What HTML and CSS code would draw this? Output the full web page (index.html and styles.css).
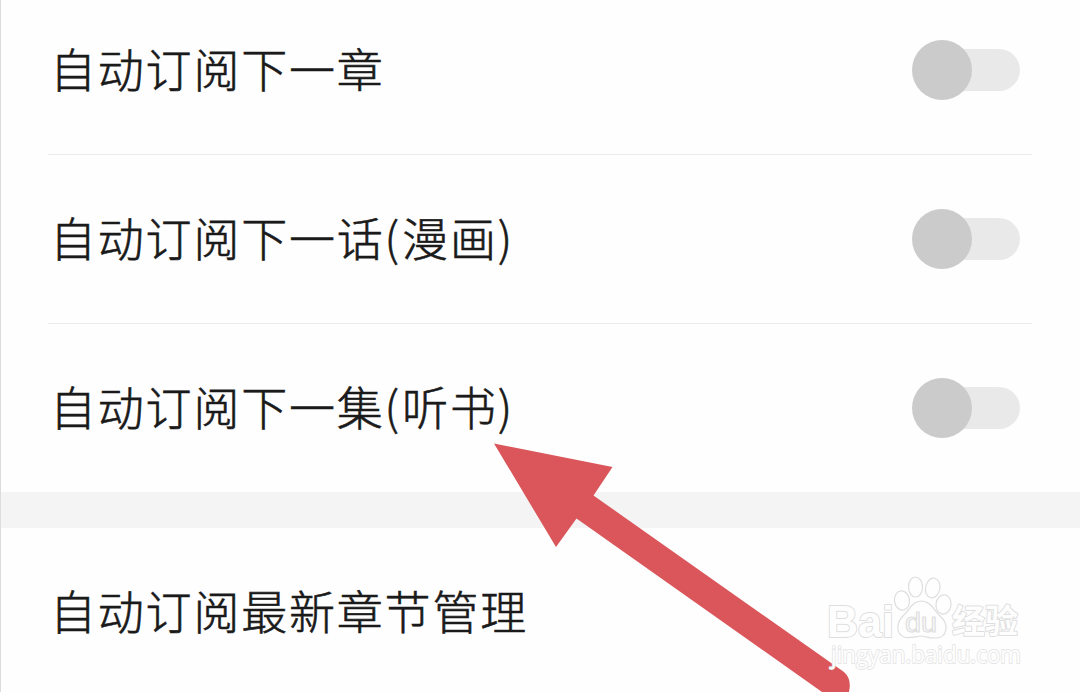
FILE: index.html
```html
<!DOCTYPE html>
<html lang="zh-CN">
<head>
<meta charset="utf-8">
<title>自动订阅</title>
<link rel="stylesheet" href="styles.css">
</head>
<body>
<main class="settings">
  <section class="group">
    <div class="row"><span class="label">自动订阅下一章</span><span class="switch"><span class="knob"></span></span></div>
    <div class="row"><span class="label">自动订阅下一话<span class="paren">(</span>漫画<span class="paren">)</span></span><span class="switch"><span class="knob"></span></span></div>
    <div class="row"><span class="label">自动订阅下一集<span class="paren">(</span>听书<span class="paren">)</span></span><span class="switch"><span class="knob"></span></span></div>
  </section>
  <div class="gap"></div>
  <section class="group">
    <div class="row"><span class="label">自动订阅最新章节管理</span></div>
  </section>
  <svg class="arrow" viewBox="0 0 1080 692" aria-hidden="true">
    <path d="M494 443.5 L612.500 467 L593.500 495.500 L844 672 Q852 679 849 692 L822 692 L576.500 518.500 L556 547 Z"/>
  </svg>
  <svg class="watermark" viewBox="810 560 240 132">
    <g class="logo">
      <text class="latin" x="827" y="636.500" textLength="67" lengthAdjust="spacingAndGlyphs">Bai</text>
      <g class="paw">
        <ellipse cx="902" cy="600.500" rx="7.500" ry="9.700" transform="rotate(-8 902 600.500)"/>
        <ellipse cx="915.500" cy="587" rx="7" ry="10"/>
        <ellipse cx="932.700" cy="588" rx="7.200" ry="10" transform="rotate(12 932.700 588)"/>
        <ellipse cx="943.500" cy="604.500" rx="7.500" ry="9.700" transform="rotate(8 943.500 604.500)"/>
        <path d="M921.500 601 C931 601 934 611 941 617 C948 623 949 638 935 638 C928 638 925 636 921 636 C916 636 910 639 904 637 C896 634 896 623 903 616 C909 611 912 601 921.500 601 Z"/>
      </g>
      <text class="du" x="905" y="632" textLength="32" lengthAdjust="spacingAndGlyphs">du</text>
      <text class="cjk" x="952" y="633" textLength="66" lengthAdjust="spacingAndGlyphs">经验</text>
    </g>
    <text class="site" x="831" y="662.500" textLength="190" lengthAdjust="spacingAndGlyphs">jingyan.baidu.com</text>
  </svg>
</main>
</body>
</html>
```
FILE: styles.css
```css
* { box-sizing: border-box; }
body { margin: 0; background: #fefefe; font-family: "Noto Sans CJK SC", sans-serif; color: #1a1a1a; }
.settings { position: relative; display: flow-root; height: 692px; overflow: hidden; border-left: 1px solid #dcdcdc; }
.group { padding: 0 48px 0 47px; }
.group:first-child { margin-top: -14px; }
.row { display: flex; align-items: center; justify-content: space-between; height: 169px; padding: 0 12px 0 2px; border-bottom: 1px solid #ececec; }
.row:last-child { height: 168px; border-bottom: 0; }
.label { font-size: 46px; font-weight: 300; line-height: 70px; letter-spacing: 1.800px; padding-bottom: 6px; white-space: nowrap; -webkit-text-stroke: 0.600px #1a1a1a; }
.paren { letter-spacing: 3px; }
.switch { display: flex; align-items: center; width: 108px; height: 42px; background: linear-gradient(90deg, transparent 30px, #e9e9e9 30px); border-radius: 21px; }
.knob { width: 60px; height: 60px; flex: none; border-radius: 50%; background: #cbcbcb; }
.gap { height: 36px; background: #f4f4f4; }
.arrow { position: absolute; left: -1px; top: 0; width: 1080px; height: 692px; fill: #db565b; }
.watermark { position: absolute; left: 809px; top: 560px; width: 240px; height: 132px; }
.watermark text, .paw { fill: #fefefe; stroke: #dedede; stroke-width: 1.200px; stroke-linejoin: round; }
.watermark .latin { font: 700 45px "Liberation Sans", sans-serif; stroke-width: 2px; paint-order: stroke; }
.du { font: 400 27px "Liberation Sans", sans-serif; }
.watermark .cjk { font: 700 33px "Noto Sans CJK SC", sans-serif; stroke-width: 2px; paint-order: stroke; }
.watermark .site { font: 400 23.500px "Open Sans", sans-serif; stroke-width: 1.800px; stroke: #e6e6e6; paint-order: stroke; }
```
